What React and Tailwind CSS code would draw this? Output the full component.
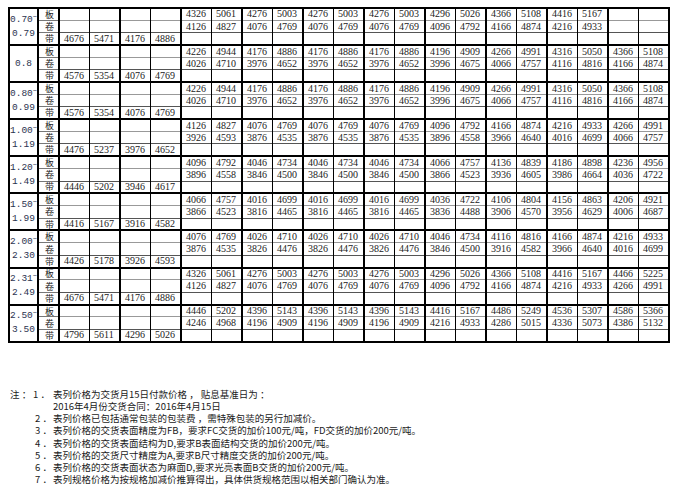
import React from 'react';

const groups = [
  {
    label: ['0.70', '0.79'],
    ban: [4326, 5061, 4276, 5003, 4276, 5003, 4276, 5003, 4296, 5026, 4366, 5108, 4416, 5167, null, null],
    juan: [4126, 4827, 4076, 4769, 4076, 4769, 4076, 4769, 4096, 4792, 4166, 4874, 4216, 4933, null, null],
    dai: [4676, 5471, 4176, 4886],
  },
  {
    label: ['0.8'],
    ban: [4226, 4944, 4176, 4886, 4176, 4886, 4176, 4886, 4196, 4909, 4266, 4991, 4316, 5050, 4366, 5108],
    juan: [4026, 4710, 3976, 4652, 3976, 4652, 3976, 4652, 3996, 4675, 4066, 4757, 4116, 4816, 4166, 4874],
    dai: [4576, 5354, 4076, 4769],
  },
  {
    label: ['0.80', '0.99'],
    ban: [4226, 4944, 4176, 4886, 4176, 4886, 4176, 4886, 4196, 4909, 4266, 4991, 4316, 5050, 4366, 5108],
    juan: [4026, 4710, 3976, 4652, 3976, 4652, 3976, 4652, 3996, 4675, 4066, 4757, 4116, 4816, 4166, 4874],
    dai: [4576, 5354, 4076, 4769],
  },
  {
    label: ['1.00', '1.19'],
    ban: [4126, 4827, 4076, 4769, 4076, 4769, 4076, 4769, 4096, 4792, 4166, 4874, 4216, 4933, 4266, 4991],
    juan: [3926, 4593, 3876, 4535, 3876, 4535, 3876, 4535, 3896, 4558, 3966, 4640, 4016, 4699, 4066, 4757],
    dai: [4476, 5237, 3976, 4652],
  },
  {
    label: ['1.20', '1.49'],
    ban: [4096, 4792, 4046, 4734, 4046, 4734, 4046, 4734, 4066, 4757, 4136, 4839, 4186, 4898, 4236, 4956],
    juan: [3896, 4558, 3846, 4500, 3846, 4500, 3846, 4500, 3866, 4523, 3936, 4605, 3986, 4664, 4036, 4722],
    dai: [4446, 5202, 3946, 4617],
  },
  {
    label: ['1.50', '1.99'],
    ban: [4066, 4757, 4016, 4699, 4016, 4699, 4016, 4699, 4036, 4722, 4106, 4804, 4156, 4863, 4206, 4921],
    juan: [3866, 4523, 3816, 4465, 3816, 4465, 3816, 4465, 3836, 4488, 3906, 4570, 3956, 4629, 4006, 4687],
    dai: [4416, 5167, 3916, 4582],
  },
  {
    label: ['2.00', '2.30'],
    ban: [4076, 4769, 4026, 4710, 4026, 4710, 4026, 4710, 4046, 4734, 4116, 4816, 4166, 4874, 4216, 4933],
    juan: [3876, 4535, 3826, 4476, 3826, 4476, 3826, 4476, 3846, 4500, 3916, 4582, 3966, 4640, 4016, 4699],
    dai: [4426, 5178, 3926, 4593],
  },
  {
    label: ['2.31', '2.49'],
    ban: [4326, 5061, 4276, 5003, 4276, 5003, 4276, 5003, 4296, 5026, 4366, 5108, 4416, 5167, 4466, 5225],
    juan: [4126, 4827, 4076, 4769, 4076, 4769, 4076, 4769, 4096, 4792, 4166, 4874, 4216, 4933, 4266, 4991],
    dai: [4676, 5471, 4176, 4886],
  },
  {
    label: ['2.50', '3.50'],
    ban: [4446, 5202, 4396, 5143, 4396, 5143, 4396, 5143, 4416, 5167, 4486, 5249, 4536, 5307, 4586, 5366],
    juan: [4246, 4968, 4196, 4909, 4196, 4909, 4196, 4909, 4216, 4933, 4286, 5015, 4336, 5073, 4386, 5132],
    dai: [4796, 5611, 4296, 5026],
  },
];

const notes = [
  '表列价格已包括通常包装的包装费 ，需特殊包装的另行加减价。',
  '表列价格的交货表面精度为FB，要求FC交货的加价100元/吨，FD交货的加价200元/吨。',
  '表列价格的交货表面结构为D,要求B表面结构交货的加价200元/吨。',
  '表列价格的交货尺寸精度为A,要求B尺寸精度交货的加价200元/吨。',
  '表列价格的交货表面状态为麻面D,要求光亮表面B交货的加价200元/吨。',
  '表列规格价格为按规格加减价推算得出，具体供货规格范围以相关部门确认为准。',
];

// 20 number columns: 4 for 带, 16 for 板/卷
const Num = ({ v, i, top, mid }) => (
  <td
    className={
      'border-black p-0 pl-[4px] text-left align-middle border-l ' +
      (i % 2 === 1 ? 'border-r-2 ' : 'border-r ') +
      (top ? 'border-t-2 ' : mid ? 'border-t border-t-[#555] ' : 'border-t border-t-[#999] ')
    }
  >
    {v ?? ''}
  </td>
);

const Group = ({ g }) => {
  const rows = [
    { t: '板', cells: [null, null, null, null, ...g.ban] },
    { t: '卷', cells: [null, null, null, null, ...g.juan] },
    { t: '带', cells: [...g.dai, ...Array(16).fill(null)] },
  ];
  return rows.map((r, ri) => (
    <tr key={ri} className="h-[12.37px]">
      {ri === 0 && (
        <td
          rowSpan={3}
          className="border-2 border-black p-0 text-center align-middle font-['Liberation_Mono',monospace] text-[9.5px] leading-[14px] text-[#2b3350]"
        >
          {g.label.length === 2 ? (
            <>
              <div className="whitespace-nowrap">
                {g.label[0]}
                <span className="relative -top-[3px] text-[7px]">~</span>
              </div>
              <div>{g.label[1]}</div>
            </>
          ) : (
            <div>{g.label[0]}</div>
          )}
        </td>
      )}
      <td
        className={
          "border-black border-r-2 p-0 pl-[6px] text-left align-middle font-['Noto_Sans_CJK_SC',sans-serif] text-[9px] leading-[9px] text-[#222] " +
          (ri === 0 ? 'border-t-2' : 'border-t border-t-[#777]')
        }
      >
        {r.t}
      </td>
      {r.cells.map((v, i) => (
        <Num key={i} v={v} i={i} top={ri === 0} mid={ri === 2} />
      ))}
    </tr>
  ));
};

export default function App() {
  return (
    <div className="w-[676px] h-[496px] bg-white pt-[7px] overflow-hidden font-['Liberation_Serif',serif] text-[#222]">
      <table className="ml-[8px] table-fixed border-collapse border-b-2 border-black text-[10px] leading-none">
        <colgroup>
          <col className="w-[28px]" />
          <col className="w-[21px]" />
          {Array.from({ length: 20 }).map((_, i) => (
            <col key={i} className="w-[30.5px]" />
          ))}
        </colgroup>
        <tbody>
          {groups.map((g, gi) => (
            <Group key={gi} g={g} />
          ))}
        </tbody>
      </table>

      <div className="mt-[45px] pl-[10px] font-['Noto_Sans_CJK_SC',sans-serif] text-[9.5px] leading-[12.2px] text-[#1a1a1a]">
        <div className="flex">
          <span className="w-[23px]">注 ：</span>
          <span>
            <span className="inline-block w-[20px]">1 ．</span>
            表列价格为交货月15日付款价格 ， 贴息基准日为 ：
          </span>
        </div>
        <div className="pl-[43px]">2016年4月份交货合同：2016年4月15日</div>
        {notes.map((n, i) => (
          <div key={i} className="pl-[25px]">
            <span className="inline-block w-[18px]">{i + 2} ．</span>
            {n}
          </div>
        ))}
      </div>
    </div>
  );
}
